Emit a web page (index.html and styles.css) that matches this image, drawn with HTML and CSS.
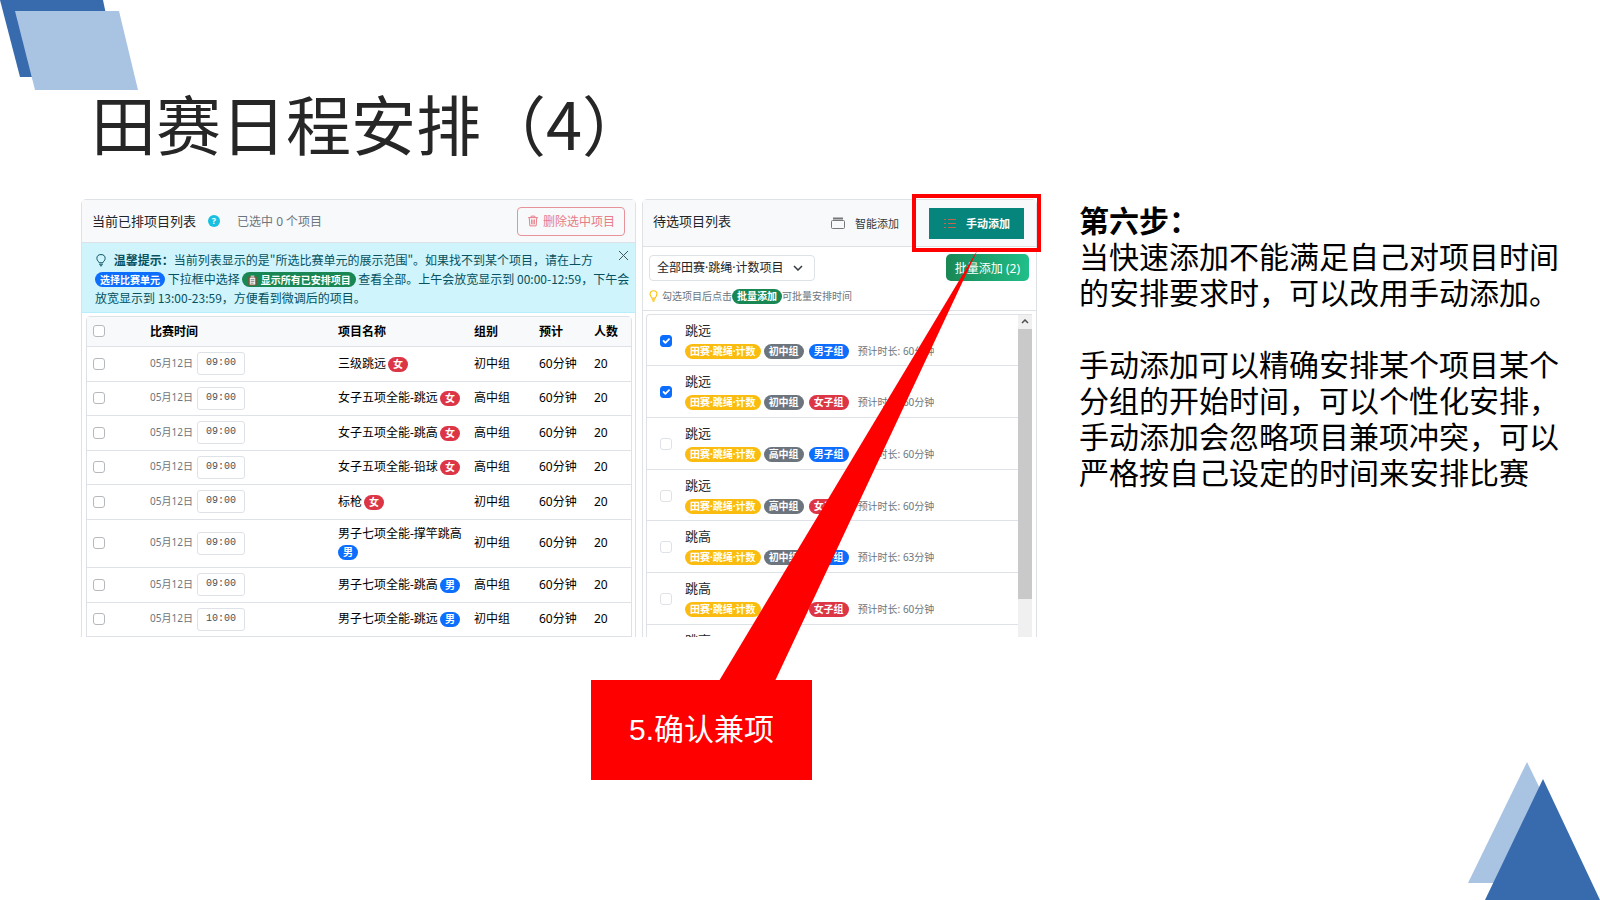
FILE: index.html
```html
<!DOCTYPE html>
<html lang="zh-CN">
<head>
  <meta charset="UTF-8" />
  <meta name="viewport" content="width=device-width, initial-scale=1.0"/>
  <title>田赛日程安排（4）</title>
  <link rel="stylesheet" href="styles.css">
</head>
<body>
  <div class="slide">
    <svg class="deco deco-top" width="140" height="92" viewBox="0 0 140 92" aria-hidden="true">
      <polygon points="0,0 103,0 119,77 20,77" fill="#386bad"/>
      <polygon points="15,11 119,11 138,90 35,90" fill="#a9c3e2"/>
    </svg>
    <svg class="deco deco-bottom" width="132" height="138" viewBox="0 0 132 138" aria-hidden="true">
      <polygon points="59,0 118,121 0,121" fill="#a9c3e2"/>
      <polygon points="75,17 132,138 17,138" fill="#386bad"/>
    </svg>

    <h1>田赛日程安排（4）</h1>

    <main class="content">
      <div class="capture">
        <div class="panels">
          <!-- Scheduled events -->
          <section class="panel">
            <div class="panel-head">
              <h2>当前已排项目列表</h2>
              <span class="help">?</span>
              <span class="picked">已选中 0 个项目</span>
              <button class="btn-delete" type="button">
                <svg width="12" height="12" viewBox="0 0 16 16" fill="none" stroke="currentColor" stroke-width="1.3" aria-hidden="true">
                  <path d="M1.5 3.5h13M5.5 3.5v-2h5v2M3 3.5l.8 11h8.4l.8-11M6 6l.3 6.5M8 6v6.5M10 6l-.3 6.5"/>
                </svg>
                删除选中项目
              </button>
            </div>

            <div class="alert">
              <p>
                <svg class="bulb" width="12" height="13" viewBox="0 0 16 17" fill="none" stroke="currentColor" stroke-width="1.3" aria-hidden="true">
                  <path d="M5.5 11.5C5 9.500 2.500 8.800 2.500 5.800a5.500 5.200 0 0 1 11 0c0 3-2.500 3.700-3 5.700zM5.500 13.500h5M6.500 15.500h3"/>
                </svg>
                <strong>温馨提示：</strong>当前列表显示的是"所选比赛单元的展示范围"。如果找不到某个项目，请在上方
              </p>
              <p>
                <span class="badge blue">选择比赛单元</span> 下拉框中选择
                <span class="badge green"><svg width="11" height="11" viewBox="0 0 12 12" aria-hidden="true"><rect x="1.500" y="1.500" width="9" height="10" rx="1" fill="#8a4b32"/><rect x="3" y="3" width="6" height="7.500" fill="#eee"/><rect x="4" y="0.500" width="4" height="2.500" fill="#bbb"/><path d="M4 5h4M4 7h4M4 9h3" stroke="#888"/></svg>
                  显示所有已安排项目</span>
                查看全部。上午会放宽显示到 00:00-12:59，下午会
              </p>
              <p>放宽显示到 13:00-23:59，方便看到微调后的项目。</p>
              <button class="close" type="button" aria-label="关闭">
                <svg width="11" height="11" viewBox="0 0 11 11" stroke="currentColor" aria-hidden="true"><path d="M1 1l9 9M10 1l-9 9"/></svg>
              </button>
            </div>

            <div class="table-wrap">
              <table>
                <colgroup>
                  <col class="c-check"><col class="c-time"><col class="c-name"><col class="c-group"><col class="c-dur"><col class="c-count">
                </colgroup>
                <thead>
                  <tr><th><input type="checkbox" aria-label="全选"></th><th>比赛时间</th><th>项目名称</th><th>组别</th><th>预计</th><th>人数</th></tr>
                </thead>
                <tbody>
                  <tr><td><input type="checkbox" aria-label="三级跳远"></td><td><span class="date">05月12日</span><input class="time" type="text" value="09:00" aria-label="时间"></td><td>三级跳远<span class="badge red">女</span></td><td>初中组</td><td>60分钟</td><td>20</td></tr>
                  <tr><td><input type="checkbox" aria-label="女子五项全能-跳远"></td><td><span class="date">05月12日</span><input class="time" type="text" value="09:00" aria-label="时间"></td><td>女子五项全能-跳远<span class="badge red">女</span></td><td>高中组</td><td>60分钟</td><td>20</td></tr>
                  <tr><td><input type="checkbox" aria-label="女子五项全能-跳高"></td><td><span class="date">05月12日</span><input class="time" type="text" value="09:00" aria-label="时间"></td><td>女子五项全能-跳高<span class="badge red">女</span></td><td>高中组</td><td>60分钟</td><td>20</td></tr>
                  <tr><td><input type="checkbox" aria-label="女子五项全能-铅球"></td><td><span class="date">05月12日</span><input class="time" type="text" value="09:00" aria-label="时间"></td><td>女子五项全能-铅球<span class="badge red">女</span></td><td>高中组</td><td>60分钟</td><td>20</td></tr>
                  <tr><td><input type="checkbox" aria-label="标枪"></td><td><span class="date">05月12日</span><input class="time" type="text" value="09:00" aria-label="时间"></td><td>标枪<span class="badge red">女</span></td><td>初中组</td><td>60分钟</td><td>20</td></tr>
                  <tr class="tall"><td><input type="checkbox" aria-label="男子七项全能-撑竿跳高"></td><td><span class="date">05月12日</span><input class="time" type="text" value="09:00" aria-label="时间"></td><td>男子七项全能-撑竿跳高<br><span class="badge blue">男</span></td><td>初中组</td><td>60分钟</td><td>20</td></tr>
                  <tr><td><input type="checkbox" aria-label="男子七项全能-跳高"></td><td><span class="date">05月12日</span><input class="time" type="text" value="09:00" aria-label="时间"></td><td>男子七项全能-跳高<span class="badge blue">男</span></td><td>高中组</td><td>60分钟</td><td>20</td></tr>
                  <tr><td><input type="checkbox" aria-label="男子七项全能-跳远"></td><td><span class="date">05月12日</span><input class="time" type="text" value="10:00" aria-label="时间"></td><td>男子七项全能-跳远<span class="badge blue">男</span></td><td>初中组</td><td>60分钟</td><td>20</td></tr>
                </tbody>
              </table>
            </div>
          </section>

          <!-- Candidate events -->
          <section class="panel">
            <div class="panel-head tall-head">
              <h2>待选项目列表</h2>
              <button class="tab" type="button">
                <svg width="14" height="13" viewBox="0 0 14 13" fill="none" stroke="#777" aria-hidden="true">
                  <rect x="0.500" y="3.500" width="13" height="8" rx="1"/><path d="M2 1.500h10" stroke-width="2"/>
                </svg>
                智能添加
              </button>
              <button class="tab active" type="button">
                <svg width="12" height="10" viewBox="0 0 12 10" stroke="#c0654f" aria-hidden="true">
                  <path d="M0 1.500h2M4 1.500h8M0 5.500h2M4 5.500h8M0 9.500h2M4 9.500h8"/>
                </svg>
                手动添加
              </button>
            </div>

            <div class="filter">
              <div class="filter-row">
                <div class="select-box">
                  <select aria-label="项目筛选">
                    <option>全部田赛·跳绳·计数项目</option>
                  </select>
                  <svg width="10" height="6" viewBox="0 0 10 6" fill="none" stroke="#343a40" stroke-width="1.500" aria-hidden="true"><path d="M1 1l4 4 4-4"/></svg>
                </div>
                <button class="btn-batch" type="button">批量添加 (2)</button>
              </div>
              <p class="hint">
                <svg width="9" height="12" viewBox="0 0 10 14" fill="none" stroke="#ffc107" stroke-width="1.300" aria-hidden="true">
                  <path d="M3 9.500C2.800 8 1 7.300 1 4.800a4 4 0 0 1 8 0c0 2.500-1.800 3.200-2 4.700zM3 11.300h4M3.800 13h2.400"/>
                </svg>
                <span>勾选项目后点击<span class="badge green">批量添加</span>可批量安排时间</span>
              </p>
            </div>

            <div class="list-box">
              <ul>
                <li><input type="checkbox" id="e1" checked><label for="e1">跳远</label><div class="tags"><span class="badge yellow">田赛·跳绳·计数</span><span class="badge gray">初中组</span><span class="badge blue">男子组</span><span class="dur">预计时长: 60分钟</span></div></li>
                <li><input type="checkbox" id="e2" checked><label for="e2">跳远</label><div class="tags"><span class="badge yellow">田赛·跳绳·计数</span><span class="badge gray">初中组</span><span class="badge red">女子组</span><span class="dur">预计时长: 60分钟</span></div></li>
                <li><input type="checkbox" id="e3"><label for="e3">跳远</label><div class="tags"><span class="badge yellow">田赛·跳绳·计数</span><span class="badge gray">高中组</span><span class="badge blue">男子组</span><span class="dur">预计时长: 60分钟</span></div></li>
                <li><input type="checkbox" id="e4"><label for="e4">跳远</label><div class="tags"><span class="badge yellow">田赛·跳绳·计数</span><span class="badge gray">高中组</span><span class="badge red">女子组</span><span class="dur">预计时长: 60分钟</span></div></li>
                <li><input type="checkbox" id="e5"><label for="e5">跳高</label><div class="tags"><span class="badge yellow">田赛·跳绳·计数</span><span class="badge gray">初中组</span><span class="badge blue">男子组</span><span class="dur">预计时长: 63分钟</span></div></li>
                <li><input type="checkbox" id="e6"><label for="e6">跳高</label><div class="tags"><span class="badge yellow">田赛·跳绳·计数</span><span class="badge gray">初中组</span><span class="badge red">女子组</span><span class="dur">预计时长: 60分钟</span></div></li>
                <li><input type="checkbox" id="e7"><label for="e7">跳高</label></li>
              </ul>
              <div class="scrollbar">
                <svg width="8" height="5" viewBox="0 0 8 5" fill="none" stroke="#505050" stroke-width="1.500" aria-hidden="true"><path d="M1 4l3-3 3 3"/></svg>
                <div class="thumb"></div>
              </div>
            </div>
          </section>
        </div>

        <!-- Callout drawn over the panels -->
        <div class="frame"></div>
        <svg class="pointer" width="260" height="432" viewBox="0 0 260 432" aria-hidden="true">
          <polygon points="259,0 0,432 56,432" fill="#f00"/>
        </svg>
        <div class="callout">5.确认兼项</div>
      </div>

      <div class="notes">
        <p><strong>第六步：</strong></p>
        <p>当快速添加不能满足自己对项目时间的安排要求时，可以改用手动添加。</p>
        <p class="gap">手动添加可以精确安排某个项目某个分组的开始时间，可以个性化安排，手动添加会忽略项目兼项冲突，可以严格按自己设定的时间来安排比赛</p>
      </div>
    </main>
  </div>
</body>
</html>
```
FILE: styles.css
```css
* {
  box-sizing: border-box;
}
body {
  margin: 0;
  background: #fff;
  color: #212529;
  font-family: "Noto Sans", "Noto Sans CJK SC", sans-serif;
  font-size: 12px;
}
h1, h2, p, ul {
  margin: 0;
  padding: 0;
  font-weight: normal;
}
button, input, select {
  font-family: inherit;
  margin: 0;
}
.slide {
  position: relative;
  min-height: 100vh;
  padding: 74px 40px 40px 81px;
  overflow: hidden;
}
.deco {
  position: absolute;
}
.deco-top {
  top: 0;
  left: 0;
}
.deco-bottom {
  right: 0;
  bottom: 0;
}
h1 {
  position: relative;
  padding-left: 10px;
  font-family: "Noto Sans CJK SC", sans-serif;
  font-size: 65px;
  line-height: 96px;
  color: #262626;
}
.content {
  display: grid;
  grid-template-columns: 956fr 481fr;
  gap: 42px;
  margin-top: 29px;
}
.capture {
  position: relative;
}
.panels {
  display: grid;
  grid-template-columns: 555fr 395fr;
  gap: 6px;
  height: 438px;
  overflow: hidden;
}
.panel {
  border: 1px solid #dee2e6;
  border-radius: 5px 5px 0 0;
  min-width: 0;
}
.panel-head {
  display: flex;
  align-items: center;
  height: 43px;
  padding: 0 10px;
  background: #f8f9fa;
  border-bottom: 1px solid #dee2e6;
}
.tall-head {
  height: 47px;
  padding-right: 12px;
}
h2 {
  padding-bottom: 1px;
  font-size: 13px;
}
.help {
  width: 12px;
  height: 12px;
  margin: 0 17px 0 12px;
  border-radius: 50%;
  background: #17bfe0;
  color: #fff;
  font-size: 9px;
  font-weight: bold;
  line-height: 12px;
  text-align: center;
}
.picked {
  color: #6c757d;
}
.btn-delete {
  display: flex;
  align-items: center;
  gap: 4px;
  height: 29px;
  margin-left: auto;
  padding: 0 9px;
  border: 1px solid #e8939b;
  border-radius: 4px;
  background: none;
  color: #e67c87;
  font-size: 12px;
}
.tab {
  display: flex;
  align-items: center;
  gap: 10px;
  height: 31px;
  padding: 0;
  border: 0;
  background: none;
  color: #343a40;
  font-size: 11px;
}
.tall-head h2 {
  margin-right: auto;
  padding-bottom: 6px;
}
.tab.active {
  margin-left: 30px;
  padding: 0 14px 0 15px;
  background: #05857c;
  color: #fff;
  font-weight: bold;
}
.alert {
  position: relative;
  height: 70px;
  padding: 7px 10px 0 13px;
  background: #cff4fc;
  border-bottom: 1px solid #b6effb;
  color: #055160;
  font-family: "Noto Sans CJK SC", sans-serif;
  line-height: 19px;
  white-space: nowrap;
}
.bulb {
  margin-right: 4px;
  vertical-align: -2px;
}
.close {
  position: absolute;
  top: 7px;
  right: 6px;
  width: 11px;
  height: 11px;
  padding: 0;
  border: 0;
  background: none;
  color: #455;
  line-height: 0;
}
.badge {
  display: inline-block;
  height: 15px;
  padding: 0 5px;
  border-radius: 8px;
  color: #fff;
  font-size: 10px;
  font-weight: bold;
  line-height: 15px;
  white-space: nowrap;
}
.badge svg {
  vertical-align: -2px;
}
.blue { background: #0d6efd; }
.green { background: #198754; }
.red { background: #dc3545; }
.yellow { background: #fbbc10; }
.gray { background: #6c757d; }

.table-wrap {
  margin: 3px 3px 0 4px;
  border: 1px solid #dee2e6;
  border-radius: 4px 4px 0 0;
}
table {
  width: 100%;
  table-layout: fixed;
  border-collapse: collapse;
  color: #000;
}
.c-check { width: 63px; }
.c-time { width: 188px; }
.c-name { width: 136px; }
.c-group { width: 65px; }
.c-dur { width: 55px; }
th {
  height: 29px;
  padding: 0;
  background: #f8f9fa;
  border-bottom: 1px solid #dee2e6;
  text-align: left;
}
td {
  height: 35px;
  padding: 0;
  border-bottom: 1px solid #dee2e6;
  line-height: 18px;
  white-space: nowrap;
}
td .badge {
  margin-left: 2px;
}
td br + .badge {
  margin-left: 0;
}
tr:nth-child(even) td {
  height: 34px;
}
tr.tall td {
  height: 48px;
}
th:first-child, td:first-child {
  padding-left: 6px;
}
input[type="checkbox"] {
  display: block;
  flex: none;
  appearance: none;
  width: 12px;
  height: 12px;
  border: 1px solid #b5b9bd;
  border-radius: 3px;
  background: #fff;
}
.date {
  margin-right: 4px;
  color: #6c757d;
  font-size: 10px;
}
.time {
  width: 48px;
  height: 23px;
  padding: 0 0 2px;
  border: 1px solid #dee2e6;
  border-radius: 3px;
  color: #495057;
  font-family: "Liberation Mono", monospace;
  font-size: 10px;
  text-align: center;
  vertical-align: middle;
}

.filter {
  height: 64px;
  padding: 7px 7px 0 6px;
  border-bottom: 1px solid #dee2e6;
}
.filter-row {
  display: flex;
  justify-content: space-between;
  align-items: center;
}
.select-box {
  position: relative;
}
.select-box svg {
  position: absolute;
  top: 10px;
  right: 12px;
}
select {
  display: block;
  appearance: none;
  width: 166px;
  height: 26px;
  padding: 0 7px;
  border: 1px solid #dee2e6;
  border-radius: 4px;
  background: #fff;
  color: #212529;
  font-size: 12px;
}
.btn-batch {
  height: 27px;
  padding: 0 9px;
  border: 0;
  border-radius: 5px;
  background: linear-gradient(90deg, #198754, #20bf8a);
  color: #fff;
  font-size: 12px;
}
.hint {
  display: flex;
  align-items: center;
  gap: 4px;
  margin-top: 6px;
  color: #6c757d;
  font-size: 10px;
  line-height: 18px;
}
.list-box {
  display: flex;
  height: 340px;
  margin: 3px 4px 0 3px;
  border: 1px solid #dee2e6;
  border-right: 0;
  border-radius: 4px 0 0 0;
}
ul {
  flex: 1;
  list-style: none;
}
li {
  display: grid;
  grid-template-columns: 25px 1fr;
  grid-template-rows: 20px 20px;
  align-items: center;
  height: 52px;
  padding: 6px 0 0 13px;
  border-bottom: 1px solid #dee2e6;
}
li:nth-child(3n + 1) {
  height: 51px;
}
li input {
  grid-row: 1 / 3;
}
li input[type="checkbox"] {
  border-color: #dee2e6;
}
li input[type="checkbox"]:checked {
  border-color: #0d6efd;
  background: #0d6efd url("data:image/svg+xml,%3Csvg xmlns='http://www.w3.org/2000/svg' viewBox='0 0 20 20'%3E%3Cpath fill='none' stroke='%23fff' stroke-linecap='round' stroke-linejoin='round' stroke-width='3' d='m6 10 3 3 6-6'/%3E%3C/svg%3E") center / 12px;
}
label {
  font-size: 13px;
  line-height: 18px;
  padding-bottom: 2px;
}
.tags {
  display: flex;
  align-items: center;
  line-height: 15px;
}
.tags .yellow { margin-right: 3px; }
.tags .gray { margin-right: 5px; }
.dur {
  margin-left: 9px;
  color: #6c757d;
  font-size: 10px;
}
.scrollbar {
  width: 14px;
  background: #f0f0f0;
}
.scrollbar svg {
  display: block;
  margin: 4px auto 5px;
}
.thumb {
  height: 270px;
  background: #c9c9c9;
}

.frame {
  position: absolute;
  top: -5px;
  right: -4px;
  width: 129px;
  height: 58px;
  border: 4px solid #f00;
}
.pointer {
  position: absolute;
  top: 50px;
  left: 638px;
}
.callout {
  position: absolute;
  top: 481px;
  left: 510px;
  width: 221px;
  height: 100px;
  background: #f00;
  color: #fff;
  font-family: "Liberation Sans", "Noto Sans CJK SC", sans-serif;
  font-size: 30px;
  line-height: 99px;
  text-align: center;
}
.notes {
  padding-top: 2px;
  color: #000;
  font-family: "Noto Sans CJK SC", sans-serif;
  font-size: 30px;
  line-height: 36px;
}
.notes .gap {
  margin-top: 36px;
}
```
